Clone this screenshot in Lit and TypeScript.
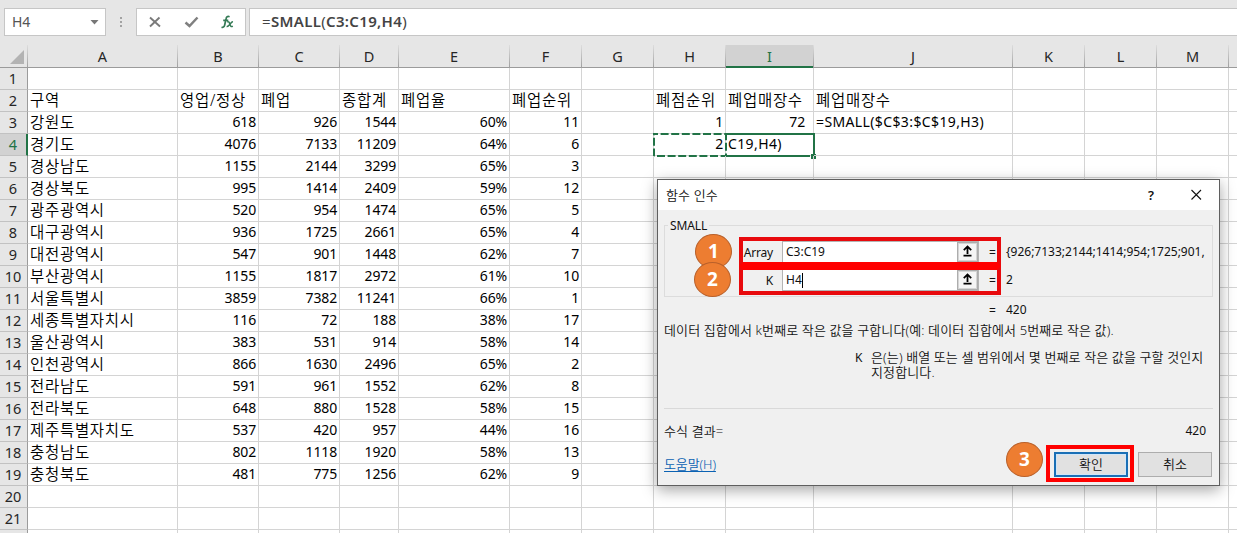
import { LitElement, html, css, svg } from "lit";
import { customElement } from "lit/decorators.js";
import { classMap } from "lit/directives/class-map.js";

const COLS = ["A", "B", "C", "D", "E", "F", "G", "H", "I", "J", "K", "L", "M", ""];

const DATA: string[][] = [
  ["강원도", "618", "926", "1544", "60%", "11"],
  ["경기도", "4076", "7133", "11209", "64%", "6"],
  ["경상남도", "1155", "2144", "3299", "65%", "3"],
  ["경상북도", "995", "1414", "2409", "59%", "12"],
  ["광주광역시", "520", "954", "1474", "65%", "5"],
  ["대구광역시", "936", "1725", "2661", "65%", "4"],
  ["대전광역시", "547", "901", "1448", "62%", "7"],
  ["부산광역시", "1155", "1817", "2972", "61%", "10"],
  ["서울특별시", "3859", "7382", "11241", "66%", "1"],
  ["세종특별자치시", "116", "72", "188", "38%", "17"],
  ["울산광역시", "383", "531", "914", "58%", "14"],
  ["인천광역시", "866", "1630", "2496", "65%", "2"],
  ["전라남도", "591", "961", "1552", "62%", "8"],
  ["전라북도", "648", "880", "1528", "58%", "15"],
  ["제주특별자치도", "537", "420", "957", "44%", "16"],
  ["충청남도", "802", "1118", "1920", "58%", "13"],
  ["충청북도", "481", "775", "1256", "62%", "9"],
];

const EXTRA: Record<string, string> = {
  H2: "폐점순위", I2: "폐업매장수", J2: "폐업매장수",
  H3: "1", I3: "72", J3: "=SMALL($C$3:$C$19,H3)",
  H4: "2", I4: "C19,H4)",
};

const HEAD = ["구역", "영업/정상", "폐업", "종합계", "폐업율", "폐업순위"];
const LAST_ROW = 21;

function valueAt(col: number, row: number): string {
  const extra = EXTRA[COLS[col] + row];
  if (extra) return extra;
  if (row === 2) return HEAD[col] ?? "";
  if (row >= 3 && row <= 19) return DATA[row - 3][col] ?? "";
  return "";
}

@customElement("formula-bar")
class FormulaBar extends LitElement {
  static styles = css`
    :host { display: flex; height: 45px; box-sizing: border-box; padding: 8px 0 8px 4px; background: #e6e6e6; color: #444; font: 14px/26px "Noto Sans", "Noto Sans CJK KR", sans-serif; }
    .box { box-sizing: border-box; height: 28px; border: 1px solid #c6c6c6; background: #fff; display: flex; align-items: center; }
    .name { width: 102px; padding: 0 6px 0 7px; justify-content: space-between; color: #555; }
    .dots { width: 30px; height: 28px; }
    .tools { width: 110px; }
    .input { flex: 1; margin-left: 3px; border-right: 0; padding-left: 12px; font-size: 15px; letter-spacing: 0.33px; }
    .input span { position: relative; top: -1px; white-space: pre; }
    b { font-weight: 600; }
    svg { display: block; }
  `;
  render() {
    return html`
      <div class="box name"><span>H4</span><svg width="9" height="5"><path d="M0.5 0H8.5L4.5 4.5Z" fill="#777" /></svg></div>
      <svg class="dots" viewBox="0 0 30 28"><g fill="#a2a2a2"><rect x="14" y="9" width="2" height="2" /><rect x="14" y="13" width="2" height="2" /><rect x="14" y="17" width="2" height="2" /></g></svg>
      <div class="box tools">
        <svg width="108" height="26" viewBox="0 0 108 26" fill="none">
          <path d="M13 8.5L23 17.5M22.5 8.5L13 17.5" stroke="#7a7a7a" stroke-width="1.9" />
          <path d="M48.5 13.5L52.5 17L60.5 8.5" stroke="#808080" stroke-width="2.5" />
          <path d="M84.5 18.2C87.4 19 87.6 16.5 88 14.5L89 10C89.4 7.7 90.5 6.9 92.6 7.7M86.2 11.4H91.3" stroke="#347a55" stroke-width="1.7" />
          <path d="M90.2 13C91.8 12 92.3 13.6 92.8 15C93.4 17 94 18.3 95.8 17.2M96 12.8C93.8 12.5 92.3 17.9 89.6 17.4" stroke="#347a55" stroke-width="1.5" />
        </svg>
      </div>
      <div class="box input"><span>=<b>SMALL</b>(<b>C3:C19,H4</b>)</span></div>
    `;
  }
}

@customElement("sheet-grid")
class SheetGrid extends LitElement {
  static styles = css`
    :host { display: block; background: #fff; color: #000; font: 14px/20px "Noto Sans", "Noto Sans CJK KR", sans-serif; }
    .row { display: grid; height: 22px; grid-template-columns: 28px 150px 81px 81px 59px 111px 72px 72px 72px 88px 199px 72px 72px 72px 9px; }
    .row > div { box-sizing: border-box; }
    .head { height: 23px; background: #e6e6e6; color: #262626; line-height: 22px; }
    .letter, .corner { text-align: center; border: solid; border-width: 0 1px 0 0; border-image: linear-gradient(#e0e0e0, #9b9b9b) 1; box-shadow: inset 0 -1px #9b9b9b; }
    .letter { font-size: 14.5px; }
    .letter.active { background: #d2d2d2; color: #217346; box-shadow: inset 0 -2px #217346; }
    .num { background: #e6e6e6; border-right: 1px solid #9b9b9b; border-bottom: 1px solid #c2c2c2; text-align: center; padding-right: 1px; color: #262626; font-size: 14.5px; }
    .num.active { background: #d2d2d2; color: #217346; border-right: 2px solid #217346; padding: 0; }
    .cell { position: relative; border-right: 1px solid #d4d4d4; border-bottom: 1px solid #d4d4d4; padding: 0 2px; white-space: nowrap; letter-spacing: -0.15px; }
    .latin { letter-spacing: 0.38px; }
    .ko { font-size: 15.5px; font-weight: 350; letter-spacing: 0.7px; }
    .right { text-align: right; }
    .wide { padding-right: 8px; }
    .overlay { position: absolute; left: -1px; top: -2px; width: 90px; height: 26px; overflow: visible; }
    .ants { left: -1px; top: -1px; width: 74px; height: 24px; }
    .corner svg { display: block; margin: 5px 0 0 10px; }
  `;
  cell(c: number, r: number) {
    const v = valueAt(c, r);
    const ko = /[가-힣]/.test(v);
    const right = /^\d+%?$/.test(v);
    const cls = { cell: true, ko, right, latin: !ko && !right, wide: c === 8 && r === 3 };
    const mark = r !== 4 ? "" : c === 7
      ? html`<svg class="overlay ants" fill="none">${svg`<path d="M1 1H73V23H1Z" stroke="#217346" stroke-width="2" stroke-dasharray="8 2.6" stroke-dashoffset="4" />`}</svg>`
      : c === 8
      ? html`<svg class="overlay" fill="none">${svg`<path d="M0 2H89V22M85 24H0" stroke="#217346" stroke-width="2" /><rect x="86" y="22" width="5" height="5" fill="#217346" />`}</svg>`
      : "";
    return html`<div class=${classMap(cls)}>${v}${mark}</div>`;
  }
  render() {
    const rows = Array.from({ length: LAST_ROW + 1 }, (_, i) => i + 1);
    return html`
      <div class="row head">
        <div class="corner"><svg width="14" height="14"><path d="M14 0V14H0Z" fill="#b3b3b3" /></svg></div>
        ${COLS.map((c) => html`<div class=${classMap({ letter: true, active: c === "I" })}>${c}</div>`)}
      </div>
      ${rows.map((r) => html`<div class="row">
        <div class=${classMap({ num: true, active: r === 4 })}>${r <= LAST_ROW ? r : ""}</div>
        ${COLS.map((_, c) => this.cell(c, r))}
      </div>`)}
    `;
  }
}

@customElement("function-dialog")
class FunctionDialog extends LitElement {
  static styles = css`
    :host { display: flex; flex-direction: column; box-sizing: border-box; width: 563px; height: 307px; border: 1px solid #5f5f5f; background: #f0f0f0; box-shadow: 0 4px 14px rgba(0,0,0,.36); color: #111; font: 12px/16px "Noto Sans", "Noto Sans CJK KR", sans-serif; }
    .title { height: 30px; background: #fff; display: flex; align-items: center; padding: 0 17px 0 8px; }
    .title svg { margin-left: auto; }
    .ko { font-size: 13px; font-weight: 350; letter-spacing: 0.12px; white-space: nowrap; }
    fieldset { box-sizing: border-box; margin: 8px 7px 0 6px; width: 549px; height: 79px; border: 1px solid #dcdcdc; padding: 9px 7px 0 0; min-width: 0; }
    legend { padding: 1px 2px 0; margin-left: 3px; line-height: 14px; height: 14px; letter-spacing: -0.1px; }
    .field { display: flex; height: 20px; margin-bottom: 8px; align-items: center; }
    .label { width: 117px; box-sizing: border-box; flex: none; text-align: right; padding-right: 9px; letter-spacing: -0.2px; position: relative; top: 1px; }
    .entry { box-sizing: border-box; width: 197px; height: 22px; border: 1px solid #b4b4b4; background: #fff; display: flex; padding-left: 3px; flex: none; line-height: 20px; }
    .caret { width: 1px; height: 15px; margin-top: 3px; background: #000; }
    .pick { box-sizing: border-box; margin-left: auto; width: 21px; height: 20px; border: 1px solid #adadad; background: #f5f5f5; box-shadow: inset 0 0 0 1px #d5d5d5; }
    .pick svg { display: block; }
    .eq { width: 27px; padding-left: 10px; box-sizing: border-box; flex: none; position: relative; top: 1px; }
    .val { white-space: nowrap; letter-spacing: 0; }
    .result { display: flex; height: 16px; margin: 5px 0 0 321px; }
    .desc { margin: 4px 0 0 6px; }
    .arg { display: flex; margin: 12px 0 0 197px; height: 51px; line-height: 15px; }
    .arg span { width: 16px; flex: none; font-size: 12px; font-weight: 400; }
    .rule { flex: none; height: 1px; margin: 7px 6px 0; background: #d9d9d9; }
    .total { display: flex; justify-content: space-between; margin: 14px 13px 0 6px; }
    .foot { display: flex; align-items: center; margin: 12px 7px 0 6px; height: 26px; }
    a { color: #0b62b3; text-decoration: underline; text-underline-offset: 2px; margin-right: auto; }
    a.ko { letter-spacing: -0.1px; }
    .btn { box-sizing: border-box; width: 74px; height: 25px; border: 1px solid #adadad; background: #e1e1e1; display: grid; place-items: center; margin-left: 10px; }
    .ok { border: 2px solid #1a6fb5; box-shadow: inset 0 0 0 1px #cfe6fa; }
  `;
  pick() {
    return html`<div class="pick"><svg width="19" height="18" fill="none"><path d="M9.5 11V4M5.8 7.1L9.5 3.4L13.2 7.1M5.5 12.6H13.5" stroke="#000" stroke-width="1.8" /></svg></div>`;
  }
  render() {
    return html`
      <div class="title"><span class="ko">함수 인수</span>
        <svg width="56" height="16" fill="none"><text x="2" y="13" font-size="13" font-weight="600" fill="#111">?</text><path d="M45.5 3L55 12.5M55 3L45.5 12.5" stroke="#111" stroke-width="1.1" /></svg>
      </div>
      <fieldset>
        <legend>SMALL</legend>
        <div class="field"><div class="label">Array</div><div class="entry">C3:C19${this.pick()}</div><div class="eq">=</div><div class="val">{926;7133;2144;1414;954;1725;901,</div></div>
        <div class="field"><div class="label">K</div><div class="entry">H4<div class="caret"></div>${this.pick()}</div><div class="eq">=</div><div class="val">2</div></div>
      </fieldset>
      <div class="result"><div class="eq">=</div><div class="val">420</div></div>
      <div class="desc ko">데이터 집합에서 k번째로 작은 값을 구합니다(예: 데이터 집합에서 5번째로 작은 값).</div>
      <div class="arg ko"><span>K</span><div>은(는) 배열 또는 셀 범위에서 몇 번째로 작은 값을 구할 것인지<br />지정합니다.</div></div>
      <div class="rule"></div>
      <div class="total"><span class="ko">수식 결과=</span><span>420</span></div>
      <div class="foot"><a class="ko">도움말(H)</a><div class="btn ok ko">확인</div><div class="btn ko">취소</div></div>
    `;
  }
}

@customElement("app-root")
class AppRoot extends LitElement {
  static styles = css`
    :host { display: block; position: relative; width: 1237px; height: 533px; overflow: hidden; background: #fff; }
    function-dialog { position: absolute; left: 657px; top: 179px; }
    .frame { position: absolute; box-sizing: border-box; border: 4px solid #f00; }
    .f1 { left: 739px; top: 237px; width: 262px; height: 29px; border-color: #e80a0d #e80a0d #f00; }
    .f2 { left: 739px; top: 266px; width: 262px; height: 29px; border-color: #f00 #e80a0d #e80a0d; }
    .f3 { left: 1046px; top: 445px; width: 88px; height: 37px; }
    .step { position: absolute; box-sizing: border-box; width: 37px; height: 35px; border: 1px solid #b9602a; border-radius: 50%; background: #ed7d31; color: #fff; font: 700 19px/33px "Noto Sans", sans-serif; text-align: center; }
    .s1 { left: 695px; top: 234px; }
    .s2 { left: 694px; top: 262px; }
    .s3 { left: 1006px; top: 442px; }
  `;
  render() {
    return html`
      <formula-bar></formula-bar>
      <sheet-grid></sheet-grid>
      <function-dialog></function-dialog>
      <div class="frame f1"></div><div class="frame f2"></div><div class="frame f3"></div>
      <div class="step s1">1</div><div class="step s2">2</div><div class="step s3">3</div>
    `;
  }
}
